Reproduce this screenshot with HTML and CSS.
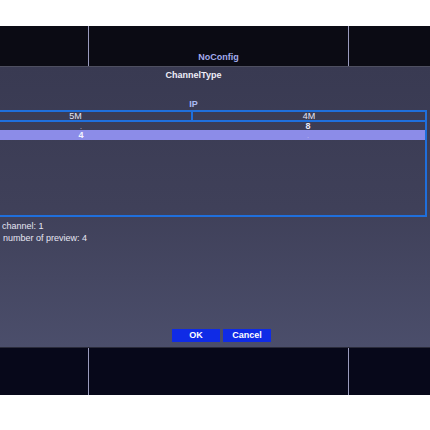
FILE: index.html
```html
<!DOCTYPE html>
<html>
<head>
<meta charset="utf-8">
<link rel="stylesheet" href="styles.css">
</head>
<body>
<div class="screen">
  <div class="gap-top"></div>
  <div class="band band-top">
    <div class="cell"></div>
    <div class="cell cell-mid"><span class="noconfig">NoConfig</span></div>
    <div class="cell cell-last"></div>
  </div>
  <div class="dialog">
    <div class="inner">
      <div class="title">ChannelType</div>
      <div class="ip">IP</div>
      <div class="table">
        <div class="row head">
          <div class="col col-a">5M</div>
          <div class="col col-b">4M</div>
        </div>
        <div class="row body">
          <div class="col col-a val-a faint">.</div>
          <div class="col col-b">8</div>
        </div>
        <div class="row body sel">
          <div class="col col-a val-a">4</div>
          <div class="col col-b faint">.</div>
        </div>
      </div>
    </div>
    <div class="info">
      <div class="line">channel: 1</div>
      <div class="line line2">number of preview: 4</div>
    </div>
    <div class="buttons">
      <div class="btn">OK</div>
      <div class="btn">Cancel</div>
    </div>
  </div>
  <div class="band band-bottom">
    <div class="cell"></div>
    <div class="cell cell-mid"></div>
    <div class="cell cell-last"></div>
  </div>
</div>
</body>
</html>
```

FILE: styles.css
```css
html, body {
  margin: 0;
  padding: 0;
  background: #ffffff;
}
.screen {
  width: 430px;
  height: 430px;
  overflow: hidden;
  display: flex;
  flex-direction: column;
  font-family: "Liberation Sans", Arial, sans-serif;
}
.gap-top {
  height: 26px;
  flex: none;
}
.band {
  flex: none;
  display: grid;
  grid-template-columns: 89px 260px 1fr;
}
.band-top {
  height: 40px;
  background: #0b0b14;
  border-bottom: 1px solid #4e4f60;
}
.band-bottom {
  height: 47px;
  background: #07081a;
  border-top: 1px solid #2a2b3a;
}
.cell {
  border-right: 1px solid #9a9bbd;
  display: flex;
  align-items: flex-end;
  justify-content: center;
}
.cell-last {
  border-right: none;
}
.noconfig {
  color: #a3abec;
  font-size: 9px;
  font-weight: bold;
  line-height: 11px;
  padding-bottom: 3px;
}
.dialog {
  flex: none;
  height: 280px;
  background: linear-gradient(180deg, #393a52 0%, #3f4059 50%, #4b4e6b 100%);
  display: flex;
  flex-direction: column;
}
.inner {
  width: 467px;
  margin-left: -40px;
  padding-top: 3px;
}
.title {
  text-align: center;
  color: #eeeef8;
  font-size: 9px;
  font-weight: bold;
  line-height: 11px;
}
.ip {
  margin-top: 18px;
  text-align: center;
  color: #aab9f4;
  font-size: 9px;
  font-weight: bold;
  line-height: 11px;
}
.table {
  height: 103px;
  border: 2px solid #1f6fdc;
  border-left: none;
  display: flex;
  flex-direction: column;
}
.row {
  display: flex;
  color: #e4e6f4;
  font-size: 9px;
  line-height: 8px;
}
.head {
  border-bottom: 2px solid #1f6fdc;
}
.head .col-a {
  border-right: 2px solid #1f6fdc;
}
.col {
  text-align: center;
}
.col-a {
  width: 231px;
}
.col-b {
  flex: 1;
  font-weight: bold;
}
.head .col-b {
  font-weight: normal;
}
.val-a {
  padding-left: 11px;
  box-sizing: border-box;
  font-weight: bold;
}
.body {
  height: 8px;
}
.sel {
  height: 10px;
  line-height: 10px;
  background: #8c8ce8;
  color: #f4f4ff;
}
.faint {
  color: #9a9ab0;
  font-weight: normal;
}
.sel .faint {
  color: #b4b4f0;
}
.info {
  margin-top: 3px;
  padding-left: 2px;
  color: #e6e7f3;
  font-size: 9px;
  line-height: 12px;
}
.line2 {
  padding-left: 1px;
}
.buttons {
  margin-top: 85px;
  padding-left: 172px;
  display: flex;
  gap: 3px;
}
.btn {
  width: 48px;
  height: 13px;
  background: #0f2be6;
  color: #ffffff;
  font-size: 9px;
  font-weight: bold;
  line-height: 13px;
  text-align: center;
}
```
